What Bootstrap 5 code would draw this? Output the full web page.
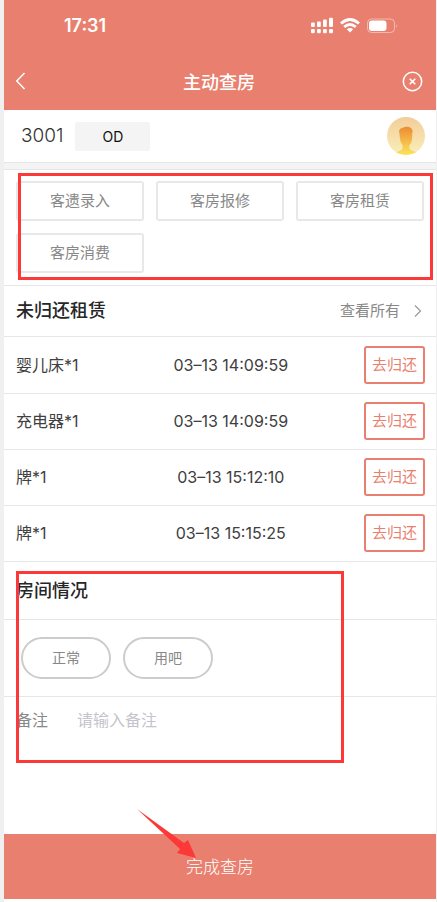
<!DOCTYPE html>
<html lang="zh-CN">
<head>
<meta charset="utf-8">
<meta name="viewport" content="width=device-width, initial-scale=1">
<title>主动查房</title>
<link href="https://cdn.jsdelivr.net/npm/bootstrap@5.3.0/dist/css/bootstrap.min.css" rel="stylesheet">
<style>
:root { --coral: #e97f6e; --line: #e6e6e6; --pen: #fd3838; }
body { font-family: Inter, "Noto Sans CJK SC", sans-serif; font-size: 16px; line-height: 24px; color: #404040; background: #fff; }
.app { border-left: 4px solid #f0f0f0; border-right: 1px solid #f0f0f0; padding-bottom: 3px; }
.coral { background: var(--coral); color: #fff; }
.rule { border-bottom: 1px solid var(--line); }
.inset { padding-left: 12px; padding-right: 12px; }
.status { height: 52px; padding: 0 38px 0 60px; }
.clock { font-size: 18px; font-weight: 600; }
.titlebar { height: 58px; }
.titlebar h1 { font-size: 18px; line-height: 24px; font-weight: 500; padding-top: 4px; }
.plain { border: 0; background: none; padding: 0; color: inherit; line-height: 0; }
.room { height: 53px; padding-left: 17px; padding-right: 11px; gap: 12px; }
.room-no { font-size: 19px; font-weight: 300; color: #333; }
.tag { background: #f4f4f4; color: #111; font-size: 14px; border-radius: 2px; width: 75px; height: 29px; line-height: 29px; }
.strip { height: 7px; background: #f4f4f4; }
.actions { display: grid; grid-template-columns: repeat(3, 1fr); gap: 12px; padding-top: 11px; padding-bottom: 12px; }
.act { height: 40px; border: 2px solid #e8e8e8; border-radius: 3px; background: #fff; color: #888; font-size: 15px; padding: 0; }
.sec { font-size: 18px; line-height: 24px; font-weight: 500; color: #262626; }
.head { padding-top: 13px; padding-bottom: 13px; }
.head-tall { padding-top: 17px; padding-bottom: 16px; }
.more { font-size: 15px; color: #888; gap: 12px; }
.rent td { height: 56px; padding: 0; vertical-align: middle; border-bottom: 1px solid var(--line); }
.rent td:first-child { width: 38%; padding-left: 12px; }
.rent td:nth-child(2) { width: 29%; text-align: center; white-space: nowrap; }
.rent td:last-child { text-align: right; padding-right: 11px; }
.give { width: 61px; height: 38px; border: 2px solid var(--coral); border-radius: 3px; background: #fff; color: var(--coral); font-size: 15px; padding: 0; }
.opts { padding: 17px; gap: 12px; }
.pill { width: 90px; height: 42px; border: 2px solid #ccc; background: #fff; color: #888; font-size: 14px; }
.memo { padding-top: 11px; gap: 29px; color: #888; }
.memo input { font-size: 16px; line-height: 24px; padding: 0; border: 0; outline: 0; min-width: 0; }
.memo input::placeholder { color: #c4c4cc; opacity: 1; }
.done { height: 65px; border: 0; font-size: 17px; font-weight: 300; }
.pen { position: absolute; border: 3px solid var(--pen); pointer-events: none; }
.pen-actions { top: 3px; bottom: 5px; left: 14px; right: 3px; }
.pen-room { top: 9px; height: 192px; left: 12px; width: 328px; }
.pen-arrow { position: absolute; left: calc(50% - 83px); top: -25px; pointer-events: none; }
</style>
<script src="https://cdn.jsdelivr.net/npm/bootstrap@5.3.0/dist/js/bootstrap.bundle.min.js"></script>
</head>
<body>
<div class="app d-flex flex-column min-vh-100">
  <header class="coral">
    <div class="status d-flex align-items-center justify-content-between">
      <span class="clock">17:31</span>
      <svg width="88" height="18" viewBox="0 0 88 18" fill="#fff" aria-hidden="true">
        <rect x="1" y="5.500" width="3.800" height="4.500" rx="1"/><rect x="7" y="4.500" width="3.800" height="5.500" rx="1"/><rect x="13" y="2.500" width="3.800" height="7.500" rx="1"/><rect x="19" y=".8" width="4" height="9.200" rx="1"/>
        <rect x="1" y="12" width="3.800" height="4.200" rx="1.200"/><rect x="7" y="12" width="3.800" height="4.200" rx="1.200"/><rect x="13" y="12" width="3.800" height="4.200" rx="1.200"/><rect x="19" y="12" width="4" height="4.200" rx="1.200"/>
        <path d="M31 6.500Q40 -1.500 49 6.500" fill="none" stroke="#fff" stroke-width="3"/>
        <path d="M34.200 10Q40 5 45.800 10" fill="none" stroke="#fff" stroke-width="2.800"/>
        <path d="M36.800 12.300Q40 9.800 43.200 12.300L40 15.500Z"/>
        <rect x="57.500" y="2" width="27" height="13.500" rx="4" fill="none" stroke="#fff" stroke-opacity=".45"/>
        <rect x="59" y="3.500" width="17.500" height="10.500" rx="3"/>
        <path d="M86 7q1.800 2 0 4z" fill-opacity=".5"/>
      </svg>
    </div>
    <div class="titlebar inset d-flex align-items-center justify-content-between">
      <button class="plain" type="button" aria-label="返回"><svg width="20" height="20" viewBox="0 0 20 20" fill="none" stroke="#fff" stroke-width="1.500"><path d="M8.500 2L.8 10l7.700 8"/></svg></button>
      <h1 class="m-0">主动查房</h1>
      <button class="plain" type="button" aria-label="关闭"><svg width="22" height="22" viewBox="0 0 22 22" fill="none" stroke="#fff" stroke-width="1.500"><circle cx="10.500" cy="11.500" r="9.200"/><path d="M7.700 8.700l5.600 5.600M13.300 8.700l-5.600 5.600" stroke-width="1.600"/></svg></button>
    </div>
  </header>

  <main class="flex-grow-1">
    <div class="room rule d-flex align-items-center">
      <span class="room-no">3001</span>
      <span class="tag text-center">OD</span>
      <svg class="ms-auto" width="38" height="38" viewBox="0 0 38 38" role="img" aria-label="头像">
        <defs>
          <linearGradient id="bg" x2="0" y2="1"><stop stop-color="#f3cd98"/><stop offset="1" stop-color="#f9efbb"/></linearGradient>
          <linearGradient id="fg" x2="0" y2="1"><stop stop-color="#ee8a35"/><stop offset="1" stop-color="#fbe55a"/></linearGradient>
          <clipPath id="disc"><circle cx="19" cy="19" r="19"/></clipPath>
        </defs>
        <circle cx="19" cy="19" r="19" fill="url(#bg)"/>
        <path clip-path="url(#disc)" fill="url(#fg)" d="M12 13.500q1.500-3 4-2.700Q18 9.300 21 9.800q4 .8 4.800 4.700l-.5 1.500-.3 7q-.5 3-2.500 5l-.2 3.500q1 2 5.200 3 2.500.7 3.500 3.500H7q2-3 4.500-3.700 3.500-1 4.200-2.800L15.500 28q-2.500-3-2.700-8Z"/>
      </svg>
    </div>
    <div class="strip rule"></div>

    <section class="actions inset rule position-relative">
      <button class="act" type="button">客遗录入</button>
      <button class="act" type="button">客房报修</button>
      <button class="act" type="button">客房租赁</button>
      <button class="act" type="button">客房消费</button>
      <div class="pen pen-actions"></div>
    </section>

    <section>
      <div class="head inset rule d-flex align-items-center justify-content-between">
        <h2 class="sec m-0">未归还租赁</h2>
        <a href="#" class="more d-flex align-items-center text-decoration-none">查看所有
          <svg width="12" height="14" viewBox="0 0 12 14" fill="none" stroke="#999" stroke-width="1.200"><path d="M3 1.500L8.500 7 3 12.500"/></svg></a>
      </div>
      <table class="rent w-100">
        <tbody>
          <tr><td>婴儿床*1</td><td>03–13 14:09:59</td><td><button class="give" type="button">去归还</button></td></tr>
          <tr><td>充电器*1</td><td>03–13 14:09:59</td><td><button class="give" type="button">去归还</button></td></tr>
          <tr><td>牌*1</td><td>03–13 15:12:10</td><td><button class="give" type="button">去归还</button></td></tr>
          <tr><td>牌*1</td><td>03–13 15:15:25</td><td><button class="give" type="button">去归还</button></td></tr>
        </tbody>
      </table>
    </section>

    <section class="position-relative">
      <div class="head-tall inset rule"><h2 class="sec m-0">房间情况</h2></div>
      <div class="opts rule d-flex">
        <button class="pill rounded-pill" type="button">正常</button>
        <button class="pill rounded-pill" type="button">用吧</button>
      </div>
      <div class="memo inset d-flex">
        <label for="memo">备注</label>
        <input id="memo" class="flex-grow-1" type="text" placeholder="请输入备注">
      </div>
      <div class="pen pen-room"></div>
    </section>
  </main>

  <footer class="position-relative">
    <button class="done coral w-100 d-block" type="button">完成查房</button>
    <svg class="pen-arrow" width="60" height="51" viewBox="0 0 60 51" fill="#fd3838" aria-hidden="true"><path d="M0 0L47 34l4-3 8 18-19-5 3-4Z"/></svg>
  </footer>
</div>
</body>
</html>
